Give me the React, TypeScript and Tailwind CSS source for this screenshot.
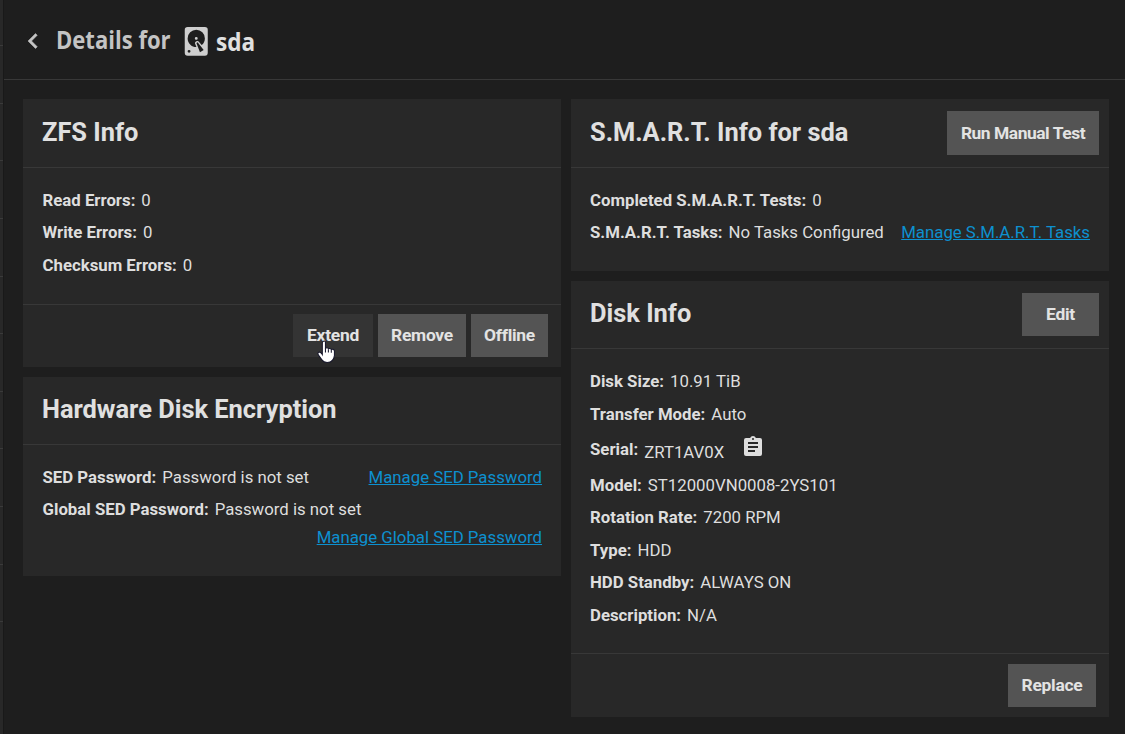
import type { ReactNode } from "react";

const guides = [45, 103, 160, 218, 276, 333, 391, 448, 506, 564, 621];

function Button({ children, className = "" }: { children: ReactNode; className?: string }) {
  return (
    <button className={`flex shrink-0 items-center justify-center text-[17.4px] font-bold tracking-[-0.25px] text-[#e3e3e3] ${className}`}>
      {children}
    </button>
  );
}

function Card({ title, action, head = "h-[69px]", className = "", children }: { title: string; action?: ReactNode; head?: string; className?: string; children: ReactNode }) {
  return (
    <section className={`flex flex-col bg-[#282828] ${className}`}>
      <header className={`flex shrink-0 items-center justify-between border-b border-[#383838] pl-[19px] pr-[10px] ${head}`}>
        <h2 className="pb-[2px] text-[25.4px] font-bold text-[#e0e0e0]">{title}</h2>
        {action}
      </header>
      {children}
    </section>
  );
}

function Row({ label, value, link, className = "h-[32.5px]" }: { label: string; value: string; link?: string; className?: string }) {
  return (
    <div className={`flex items-center whitespace-nowrap ${className}`}>
      <span className="font-bold">{label}</span>
      <span className="ml-[6px]">{value}</span>
      {link && <a className="ml-auto text-[#0d90cf] underline">{link}</a>}
    </div>
  );
}

export default function App() {
  return (
    <div className="relative flex h-[734px] w-[1125px] overflow-hidden bg-[#1e1e1e] font-['Roboto',sans-serif] text-[16.8px] text-[#dedede]">
      <aside className="relative w-[4px] shrink-0 border-r border-[#191919] bg-[#282828]">
        {guides.map((y) => (
          <i key={y} className="absolute left-0 h-px w-[3px] bg-[#3a3a3a]" style={{ top: y }} />
        ))}
      </aside>
      <div className="flex flex-1 flex-col">
        <header className="flex h-[80px] shrink-0 items-center border-b border-[#383838] pl-[14px] font-['Open_Sans',sans-serif] text-[24.5px] font-bold">
          <svg viewBox="0 0 24 24" className="mt-[3px] size-[30px] fill-[#c4c4c4] stroke-[#c4c4c4] stroke-[0.4]">
            <path d="M15.41 7.41 14 6l-6 6 6 6 1.41-1.41L10.83 12z" />
          </svg>
          <h1 className="ml-[8px] flex items-center text-[#c4c4c4]">
            <span className="mt-[2px] w-[123px] origin-left scale-x-90 whitespace-nowrap">Details for</span>
            <svg viewBox="0 0 24 24" className="mt-[3px] size-[34.5px] fill-[#cfcfcf]">
              <path d="M6,2H18A2,2 0 0,1 20,4V20A2,2 0 0,1 18,22H6A2,2 0 0,1 4,20V4A2,2 0 0,1 6,2M12,4A6,6 0 0,0 6,10C6,13.31 8.69,16 12.1,16L11.22,13.77C10.95,13.29 11.11,12.68 11.59,12.4L12.45,11.9C12.93,11.63 13.54,11.79 13.82,12.27L15.74,14.69C17.12,13.59 18,11.9 18,10A6,6 0 0,0 12,4M12,9A1,1 0 0,1 13,10A1,1 0 0,1 12,11A1,1 0 0,1 11,10A1,1 0 0,1 12,9M7,18A1,1 0 0,0 6,19A1,1 0 0,0 7,20A1,1 0 0,0 8,19A1,1 0 0,0 7,18M12.09,13.27L14.58,19.58L17.17,18.08L12.95,12.77L12.09,13.27Z" />
            </svg>
            <span className="ml-[2px] mt-[5px] origin-left scale-x-[0.92] text-[#e0e0e0]">sda</span>
          </h1>
        </header>
        <main className="grid grid-cols-[538px_538px] items-start gap-[10px] pl-[19px] pt-[19px]">
          <div className="flex flex-col gap-[10px]">
            <Card title="ZFS Info" className="h-[268px]">
              <div className="flex-1 pl-[19.5px] pr-[19px] pt-[16px]">
                <Row label="Read Errors:" value="0" />
                <Row label="Write Errors:" value="0" />
                <Row label="Checksum Errors:" value="0" />
              </div>
              <footer className="relative flex h-[63px] items-start justify-end gap-[5px] border-t border-[#383838] pr-[13px] pt-[9px]">
                <Button className="h-[43px] w-[80px] bg-[#343434]">Extend</Button>
                <Button className="h-[43px] w-[88px] bg-[#545454]">Remove</Button>
                <Button className="h-[43px] w-[77px] bg-[#545454]">Offline</Button>
                <svg viewBox="0 0 18 23" className="absolute left-[294px] top-[35px] h-[24px] w-[19px]">
                  <path d="M5.5 1.5Q7.3 .2 8 2v6q2-1.2 2.8.4 2-.9 2.8.7 2.6-.7 3 1.4v4.5q-.4 3-2 4.5-1.4 2-5 2-3.500 0-5-2.500L1.300 14.500q-1.300-2.500.800-3 1.600.200 2.900 2.500V2.500Z" fill="#fff" stroke="#17172b" />
                  <path d="M8 8v4M10.800 8.800V12M13.600 9.500V12.300" stroke="#17172b" fill="none" />
                </svg>
              </footer>
            </Card>
            <Card title="Hardware Disk Encryption" className="h-[199px]" head="h-[68px]">
              <div className="pl-[19.5px] pr-[19px] pt-[16px]">
                <Row label="SED Password:" value="Password is not set" link="Manage SED Password" />
                <Row label="Global SED Password:" value="Password is not set" />
                <div className="-mt-[2px] flex h-[28px] items-center justify-end">
                  <a className="text-[#0d90cf] underline">Manage Global SED Password</a>
                </div>
              </div>
            </Card>
          </div>
          <div className="flex flex-col gap-[10px]">
            <Card title="S.M.A.R.T. Info for sda" className="h-[172px]" action={<Button className="h-[44px] w-[152px] bg-[#545454]"><span className="tracking-[-0.45px]">Run Manual Test</span></Button>}>
              <div className="px-[19px] pt-[16px]">
                <Row label="Completed S.M.A.R.T. Tests:" value="0" />
                <Row label="S.M.A.R.T. Tasks:" value="No Tasks Configured" link="Manage S.M.A.R.T. Tasks" />
              </div>
            </Card>
            <Card title="Disk Info" className="h-[436px]" head="h-[68px]" action={<Button className="h-[43px] w-[77px] bg-[#545454] pb-px">Edit</Button>}>
              <div className="flex-1 px-[19px] pt-[16px]">
                <Row label="Disk Size:" value="10.91 TiB" />
                <Row label="Transfer Mode:" value="Auto" className="h-[33.5px]" />
                <div className="flex h-[38px] items-center">
                  <span className="font-bold">Serial:</span>
                  <span className="ml-[6px] mt-[6px]">ZRT1AV0X</span>
                  <svg viewBox="0 0 24 24" className="-mt-[6px] ml-[17px] size-[24px] fill-[#dedede]">
                    <path d="M17,9H7V7H17M17,13H7V11H17M14,17H7V15H14M12,3A1,1 0 0,1 13,4A1,1 0 0,1 12,5A1,1 0 0,1 11,4A1,1 0 0,1 12,3M19,3H14.82C14.4,1.84 13.3,1 12,1C10.7,1 9.6,1.84 9.18,3H5A2,2 0 0,0 3,5V19A2,2 0 0,0 5,21H19A2,2 0 0,0 21,19V5A2,2 0 0,0 19,3Z" />
                  </svg>
                </div>
                <Row label="Model:" value="ST12000VN0008-2YS101" />
                <Row label="Rotation Rate:" value="7200 RPM" />
                <Row label="Type:" value="HDD" />
                <Row label="HDD Standby:" value="ALWAYS ON" />
                <Row label="Description:" value="N/A" />
              </div>
              <footer className="flex h-[64px] items-center justify-end border-t border-[#383838] pr-[13px]">
                <Button className="h-[43px] w-[88px] bg-[#545454]">Replace</Button>
              </footer>
            </Card>
          </div>
        </main>
      </div>
    </div>
  );
}
